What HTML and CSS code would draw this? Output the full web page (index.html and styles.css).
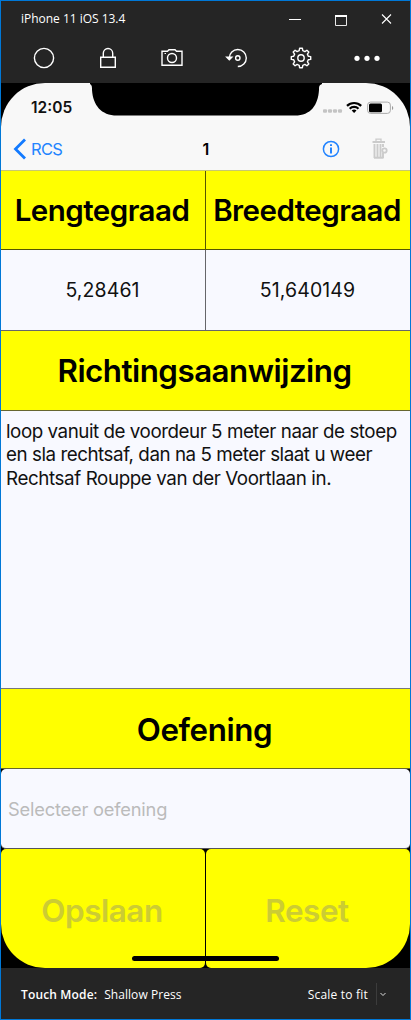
FILE: index.html
```html
<!DOCTYPE html>
<html lang="nl">
<head>
<meta charset="utf-8">
<title>iPhone 11 iOS 13.4</title>
<link rel="stylesheet" href="styles.css">
</head>
<body>
<div class="window">
  <header class="titlebar">
    <span class="title">iPhone 11 iOS 13.4</span>
    <svg class="controls" width="106" height="16" viewBox="0 0 106 16" fill="none" stroke="#fff">
      <path d="M1 9.500H13" />
      <path d="M47.500 5.500H58.500V15.500H47.500Z" stroke="#e8e8e8"/><path d="M47 6H59" stroke-width="2"/>
      <path d="M94 4.500L103 13.500M103 4.500L94 13.500" stroke-width="1.100"/>
    </svg>
  </header>
  <nav class="toolbar">
    <svg width="24" height="24" viewBox="0 0 24 24"><circle cx="12" cy="12" r="9.600"/></svg>
    <svg width="24" height="24" viewBox="0 0 24 24"><path d="M4.700 11.200H19.300V21.300H4.700ZM7.300 11V7.200a4.700 4.700 0 0 1 9.400 0V11"/></svg>
    <svg width="24" height="24" viewBox="0 0 24 24"><path d="M2 5.200H7.500L9 3.700H15L16.500 5.200H22V19.300H2Z"/><circle cx="12" cy="12" r="4.500"/><path d="M4.500 7.500H6" stroke-width="1.200"/></svg>
    <svg width="24" height="24" viewBox="0 0 24 24"><path d="M4.300 13V12a8.500 8.500 0 1 1 8.500 8.500" /><path d="M1.800 11.300L4.300 13.800L6.800 11.300Z" fill="#fff"/><circle cx="12.800" cy="12" r="2.200"/></svg>
    <svg width="24" height="24" viewBox="0 0 24 24"><path stroke-linejoin="round" d="M10.200 4.700L10.600 2.300H13.400L13.800 4.700L15.900 5.600L17.900 4.200L19.800 6.100L18.400 8.100L19.300 10.200L21.700 10.600V13.400L19.300 13.800L18.400 15.900L19.800 17.900L17.900 19.800L15.900 18.400L13.800 19.300L13.400 21.700H10.600L10.200 19.300L8.100 18.400L6.100 19.800L4.200 17.900L5.600 15.900L4.700 13.800L2.300 13.400V10.600L4.700 10.200L5.600 8.100L4.200 6.100L6.100 4.200L8.100 5.600Z"/><circle cx="12" cy="12" r="3.200"/></svg>
    <svg class="more" width="28" height="24" viewBox="0 0 28 24"><circle cx="4" cy="12.300" r="2.600"/><circle cx="14" cy="12.300" r="2.600"/><circle cx="24" cy="12.300" r="2.600"/></svg>
  </nav>

  <main class="phone">
    <div class="screen">
      <svg class="notch" width="232" height="33" viewBox="0 0 232 33"><path d="M0 0V1C2 2 2 4 2 7C3 22 11 32.500 27 32.500H205C221 32.500 228 22 229 7C229 4 229 2 232 1V0Z" fill="#000"/></svg>
      <div class="status">
        <time class="clock">12:05</time>
        <svg width="72" height="14" viewBox="0 0 72 14">
          <g fill="#c4c4c4"><rect x="0" y="8.300" width="4" height="3.500" rx="1"/><rect x="5" y="8.300" width="4" height="3.500" rx="1"/><rect x="10" y="8.300" width="4" height="3.500" rx="1"/><rect x="15" y="8.300" width="4" height="3.500" rx="1"/></g>
          <g fill="none" stroke="#000" stroke-width="2.200"><path d="M24 4.900a10.200 10.200 0 0 1 14.200 0"/><path d="M26.700 7.700a6.300 6.300 0 0 1 8.800 0"/></g><path d="M31.100 12L28.700 9.600a3.400 3.400 0 0 1 4.800 0Z"/>
          <rect x="44.600" y="1.100" width="22.800" height="11.300" rx="3" fill="none" stroke="#aaa"/><rect x="46" y="2.400" width="13" height="8.800" rx="1.500"/><path d="M69 5a2.200 2.200 0 0 1 0 4Z" fill="#999"/>
        </svg>
      </div>
      <div class="navbar">
        <a class="back"><svg width="14" height="22" viewBox="0 0 14 22" fill="none" stroke="#127aff" stroke-width="2.800"><path d="M12 1.500L2.500 11L12 20.500"/></svg><span>RCS</span></a>
        <span class="page-title">1</span>
        <span class="actions">
          <svg width="18" height="18" viewBox="0 0 18 18" fill="none" stroke="#2384ff"><circle cx="9" cy="9" r="7.600" stroke-width="1.500"/><path d="M9 4.300V6.100M9 7.500V13.500" stroke-width="2"/></svg>
          <svg width="16" height="22" viewBox="0 0 16 22" fill="none" stroke="#cbcbcb"><path d="M0.500 4H13" stroke-width="2.200"/><path d="M4 3V1.200H9V3" stroke-width="1.300"/><path d="M2.500 6V20M5.500 6V20M8.500 6V20M11 6V9M11 15V20M2 19.800H11.500" stroke-width="1.900"/><circle cx="12.500" cy="12.500" r="2.200" stroke-width="1.800"/></svg>
        </span>
      </div>
      <div class="pair heading-pair"><h2 class="cell">Lengtegraad</h2><h2 class="cell">Breedtegraad</h2></div>
      <div class="pair value-pair"><div class="cell">5,28461</div><div class="cell">51,640149</div></div>
      <h1 class="heading">Richtingsaanwijzing</h1>
      <p class="directions">loop vanuit de voordeur 5 meter naar de stoep<br>en sla rechtsaf, dan na 5 meter slaat u weer<br><span class="last-line">Rechtsaf Rouppe van der Voortlaan in.</span></p>
      <h1 class="heading heading-exercise">Oefening</h1>
      <div class="field">Selecteer oefening</div>
      <div class="buttons"><div class="button">Opslaan</div><div class="button">Reset</div></div>
      <div class="home-indicator"></div>
    </div>
  </main>

  <footer class="footer">
    <span class="mode-label">Touch Mode:</span><span class="mode">Shallow Press</span>
    <span class="scale">Scale to fit</span>
    <span class="drop"><svg width="6" height="5" viewBox="0 0 6 5" fill="none" stroke="#ddd"><path d="M.5 1L3 3.500L5.500 1"/></svg></span>
  </footer>
</div>
</body>
</html>
```
FILE: styles.css
```css
* { box-sizing: border-box; }
body { margin: 0; background: #252525; font-family: Inter, Roboto, sans-serif; }
h1, h2, p { margin: 0; }
svg { display: block; flex: none; }
.window { width: 411px; height: 1020px; border: 1px solid #0078d7; background: #252525; display: flex; flex-direction: column; overflow: hidden; }

.titlebar { height: 33px; padding: 1px 17px 0 20px; display: flex; justify-content: space-between; align-items: center; color: #fff; font: 12px "Open Sans", "Noto Sans", sans-serif; }
.title { letter-spacing: -0.02px; }
.controls { margin-right: -1px; margin-top: -1px; }
.toolbar { height: 49px; padding: 0 29px 1px 31px; display: flex; justify-content: space-between; align-items: center; }
.toolbar svg { fill: none; stroke: #fff; stroke-width: 1.4; }
.toolbar .more { fill: #fff; stroke: none; }

.phone { height: 885px; background: #000; }
.screen { position: relative; height: 885px; border-radius: 44px; overflow: hidden; background: #000; display: flex; flex-direction: column; }
.notch { position: absolute; left: 89px; top: 0; }
.status { height: 44px; padding: 0 15px 0 30px; background: #f8f8f8; display: flex; justify-content: space-between; align-items: center; }
.status svg { margin-top: 6px; }
.clock { font-size: 15.500px; font-weight: 600; margin-top: 6px; color: #111; }
.navbar { height: 44px; padding: 1px 22px 0 12px; background: #f8f8f8; border-bottom: 1px solid #c8c870; display: grid; grid-template-columns: 1fr auto 1fr; align-items: center; }
.back { display: flex; align-items: center; gap: 4px; color: #2384ff; font-size: 16.500px; }
.back span { letter-spacing: -0.7px; }
.page-title { font-size: 16px; font-weight: 600; margin-left: 11px; }
.actions { display: flex; justify-content: flex-end; align-items: center; gap: 32px; }

.pair { display: grid; grid-template-columns: 205px 1fr; background: #f8f9ff; border-bottom: 1px solid #66666a; font-size: 19.500px; }
.cell { display: flex; align-items: center; justify-content: center; white-space: nowrap; color: #111; padding-top: 1px; }
.cell:first-child { border-right: 1px solid #66666a; }
.cell + .cell { padding-right: 1px; }
.value-pair .cell { letter-spacing: 0.1px; }
.value-pair .cell:first-child { padding-right: 1px; }
.heading-pair { height: 79px; background: #ff0; border-color: #555500; }
.heading-pair .cell { font-size: 29.500px; font-weight: 600; color: #000; letter-spacing: -0.52px; }
.heading-pair .cell:first-child { border-color: #555500; padding-right: 2px; }
.heading-pair .cell + .cell { padding-right: 2px; }
.value-pair { height: 81px; }
.heading { height: 80px; padding: 2px 2px 0 0; background: #ff0; border-bottom: 1px solid #666630; display: flex; align-items: center; justify-content: center; font-size: 31.300px; font-weight: 600; letter-spacing: -0.5px; }
.directions { height: 279px; padding: 9px 5px; background: #f8f9ff; border-bottom: 1px solid #77777c; font-size: 18.800px; line-height: 23.500px; letter-spacing: -0.460px; color: #111; white-space: nowrap; }
.last-line { letter-spacing: -0.4px; }
.heading-exercise { height: 80px; letter-spacing: -0.400px; }
.field { height: 80px; border-radius: 5px; border-bottom: 1px solid #55555a; background: #f8f9ff; padding: 1px 0 0 7px; display: flex; align-items: center; color: #bbb; font-size: 18.300px; letter-spacing: -0.2px; }
.buttons { height: 119px; display: grid; grid-template-columns: 204px 1fr; gap: 1px; }
.button { background: #ff0; border-radius: 5px; display: flex; align-items: center; justify-content: center; padding: 3px 2px 0 0; color: #cccc33; font-size: 31.500px; font-weight: 600; letter-spacing: -0.5px; }
.home-indicator { position: absolute; left: 131px; top: 873px; width: 147px; height: 5px; border-radius: 3px; background: #000; }

.footer { flex: 1; padding: 1px 24px 0 20px; display: flex; align-items: center; color: #fff; font: 12px "Open Sans", "Noto Sans", sans-serif; white-space: nowrap; }
.mode-label { font-weight: 600; margin-right: 7px; letter-spacing: 0.15px; }
.mode { letter-spacing: 0.06px; }
.scale { margin-left: auto; letter-spacing: 0.2px; }
.drop { margin-left: 8px; height: 22px; padding-left: 3px; border-left: 1px solid #3c3c3c; display: flex; align-items: center; }
```
